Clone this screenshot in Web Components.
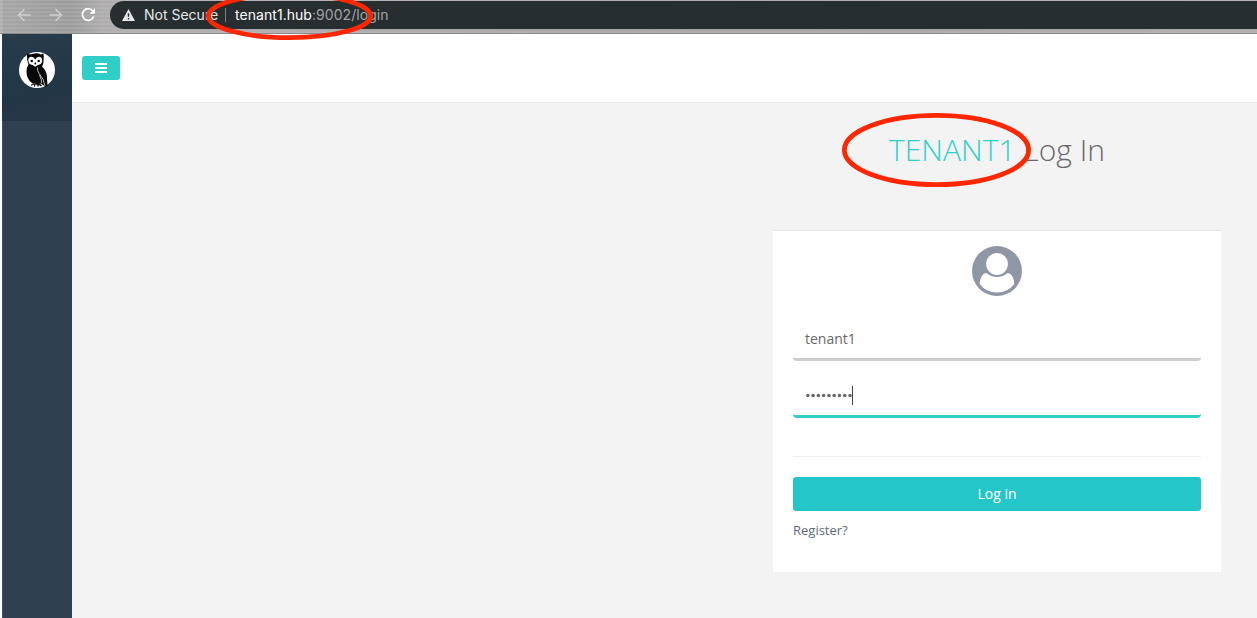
<!DOCTYPE html>
<html lang="en">
<head>
<meta charset="utf-8">
<title>Log In</title>
<style>
html,body{margin:0;height:100%;overflow:hidden;background:#fff;font-family:"Open Sans","Noto Sans",sans-serif;color:#676a6c}
</style>
</head>
<body>
<tenant-app></tenant-app>
<script>
function define(name, html, setup) {
  customElements.define(name, class extends HTMLElement {
    constructor() {
      super();
      this.attachShadow({mode: "open"}).innerHTML = html;
    }
    connectedCallback() { if (setup) setup(this); }
  });
}

define("browser-bar", `<style>
:host{display:flex;height:34px;box-sizing:border-box;position:relative;padding-top:1px;border-bottom:1px solid #8b8889;
background:repeating-linear-gradient(180deg,rgba(255,255,255,.07) 0 1px,rgba(0,0,0,.02) 1px 3px,rgba(255,255,255,.04) 3px 4px),linear-gradient(90deg,#b4b4b4 0 2px,#a8a8a8 3px,#a09f9f 70px,#b2b0b0 105px,#aaa7a8 60%,#b2afb0);
font:14px/28px Inter,"Liberation Sans",sans-serif}
.nav{width:110px;flex:none;height:28px}
.nav svg{display:block}
.address{flex:1;height:28px;background:#272e30;border-radius:14px 0 0 14px;display:flex;align-items:center;color:#e6e7e8;white-space:pre}
.warn{margin:0 9px 0 12px;width:13px;height:12px}
.state{width:74px}
.sep{width:1px;height:14px;background:#777c7e;margin:0 9px 0 7px}
.url{color:#fff;letter-spacing:.05px}.rest{color:#a0a4a6}
</style>
<div class="nav"><svg width="110" height="28" viewBox="0 0 110 28" fill="none" stroke-width="1.4">
<path d="M30.500 14H18.500M24.500 8l-6 6 6 6M49.500 14h12M55.500 8l6 6-6 6" stroke="#cfcfcf"/>
<path d="M93 10.200A5.800 5.800 0 1 0 93.700 15.500" stroke="#fff" stroke-width="1.700"/><path d="M95 7.300v5.500h-5.500z" fill="#fff"/></svg></div>
<div class="address"><svg class="warn" viewBox="0 0 13 12"><path d="M6.500 0L13 12H0z" fill="#e8e9e9"/><path d="M6.500 4.200v3.600M6.500 9v1.500" stroke="#272e30" stroke-width="1.400"/></svg><span class="state">Not Secure</span><i class="sep"></i><span class="url">tenant1.hub<span class="rest">:9002/login</span></span></div>`);

define("owl-logo", `<style>:host{display:block;width:36px;height:36px}svg{display:block}</style>
<svg width="36" height="36" viewBox="0 0 36 36"><circle cx="18" cy="18" r="18" fill="#fff"/>
<path d="M8 1.500Q10 3 14 1.800 18 .5 22 2.500L24.500 1.500Q25 5 24.500 9 24.600 13 23 14.500 28 19 28 26L28.500 34 26.500 35 22 31.500 19 32 13 31Q7.500 27 7.500 20 7.500 15 9.500 12.500 7.500 8 8 1.500Z" fill="#080808"/>
<path d="M9.300 8.500Q9.300 4.800 12.500 4.800 15 5 16.200 7.500 17.500 5 20 4.800 23.200 4.800 23.200 8.500 23 12.500 18.800 13L16.200 14.800 13.600 13Q9.500 12.500 9.300 8.500Z" fill="#fff"/>
<circle cx="12.800" cy="9" r="1.200"/><circle cx="19.700" cy="9" r="1.200"/><path d="M16.200 10l.9 1.500-.9 1.500-.9-1.500z"/>
<path d="M18.500 15.500Q18 19 20.500 22 25 27 26 34M20.500 23Q23 28 22.500 31" fill="none" stroke="#fff" stroke-width=".7"/>
<path d="M12.500 33.500q1-2.500 3-1 1.500-1.500 3 0 2-1 4 1.500M15.500 33v1.500M19 33v1.500" fill="none" stroke="#080808" stroke-width="1.300"/></svg>`);

define("side-nav", `<style>
:host{display:block;width:70px;margin-left:2px;flex:none;background:#2f4050;box-shadow:inset 1px 0 #40505f}
.brand{height:87px;box-sizing:border-box;padding:18px 0 0 17px;background:linear-gradient(165deg,#283c4c,#233645 65%,#273847)}
</style><div class="brand"><owl-logo></owl-logo></div>`);

define("top-header", `<style>
:host{display:block;height:69px;box-sizing:border-box;background:#fff;border-bottom:1px solid #e7e8e9;padding:22px 0 0 10px}
button{display:flex;align-items:center;justify-content:center;width:38px;height:24px;border:0;border-radius:3px;background:#2fcfc8;padding:0}
</style><button aria-label="Menu"><svg width="12" height="10" viewBox="0 0 12 10"><path d="M0 1h12M0 5h12M0 9h12" stroke="#fff" stroke-width="2"/></svg></button>`);

define("page-title", `<style>
:host{display:block;text-align:center;font-size:30px;line-height:40px;font-weight:300;white-space:nowrap}
::slotted(*){color:#2fcfc8}
</style><slot></slot> Log In`);

define("user-avatar", `<style>:host{display:block;width:50px;height:50px;margin:0 auto}svg{display:block}</style>
<svg width="50" height="50" viewBox="0 0 50 50"><circle cx="25" cy="25" r="25" fill="#8f96a5"/><circle cx="25" cy="18" r="10.900" fill="#fff"/>
<path d="M14.500 27Q19 31 25 31T35.500 27C39 27 42 31.500 42.300 38Q36 46.500 25 46.500T7.700 38C8 31.500 11 27 14.500 27Z" fill="#fff"/></svg>`);

define("text-field", `<style>
:host{display:flex;align-items:center;box-sizing:border-box;height:44px;padding:2px 12px 0;font-size:14px;line-height:20px;border-bottom:3px solid #ccc;border-radius:4px}
:host([active]){border-color:#2fcfc8}
svg{display:none}
:host([active]) svg{display:block}
</style><slot></slot><svg width="50" height="20" viewBox="0 0 50 20"><g fill="#676a6c">${Array.from({length:9},(_, i) => `<circle cx="${2.8 + i * 5.28}" cy="9.500" r="1.800"/>`).join("")}</g><path d="M47.500 0v19" stroke="#444"/></svg>`);

define("submit-button", `<style>
:host{display:block}button{display:block;width:100%;height:34px;border:0;border-radius:3px;background:#25c6c9;color:#fff;font:14px/20px "Open Sans","Noto Sans",sans-serif;padding:0}
</style><button><slot></slot></button>`);

define("login-card", `<style>
:host{display:block;width:448px;height:342px;box-sizing:border-box;border-top:1px solid #e7e7e7;background:#fff;padding:15px 20px 0}
.first{margin-top:21px}.second{margin-top:13px}
hr{border:0;border-top:1px solid #eee;margin:38px 0 20px}
a{display:block;margin-top:10px;font-size:13px;line-height:19px;color:#5e6b7d}
</style><user-avatar></user-avatar>
<text-field class="first">tenant1</text-field><text-field class="second" active></text-field>
<hr><submit-button>Log in</submit-button><a>Register?</a>`);

define("mark-ring", `<style>:host{position:absolute;display:block;pointer-events:none}svg{display:block;overflow:visible}</style><svg><ellipse fill="none" stroke="#ff2600" stroke-width="4.700"/></svg>`, el => {
  const w = +el.getAttribute("w"), h = +el.getAttribute("h");
  const svg = el.shadowRoot.querySelector("svg"), e = svg.firstElementChild;
  svg.setAttribute("width", w); svg.setAttribute("height", h);
  e.setAttribute("cx", w / 2); e.setAttribute("cy", h / 2);
  e.setAttribute("rx", w / 2 - 2.35); e.setAttribute("ry", h / 2 - 2.35);
});

define("tenant-app", `<style>
:host{display:flex;flex-direction:column;height:618px;position:relative;overflow:hidden}
.body{display:flex;flex:1;min-height:0}
.content{flex:1;display:flex;flex-direction:column}
main{flex:1;background:#f3f3f3;display:flex;flex-direction:column;align-items:flex-end;padding:27px 36px 0 0}
page-title{width:448px;margin-bottom:60px}
.r1{left:206px;top:-8px}.r2{left:842px;top:113px}
</style><browser-bar></browser-bar>
<div class="body"><side-nav></side-nav><div class="content"><top-header></top-header>
<main><page-title><span>TENANT1</span></page-title><login-card></login-card></main></div></div>
<mark-ring class="r1" w="167" h="48"></mark-ring><mark-ring class="r2" w="189" h="74"></mark-ring>`);
</script>
</body>
</html>
